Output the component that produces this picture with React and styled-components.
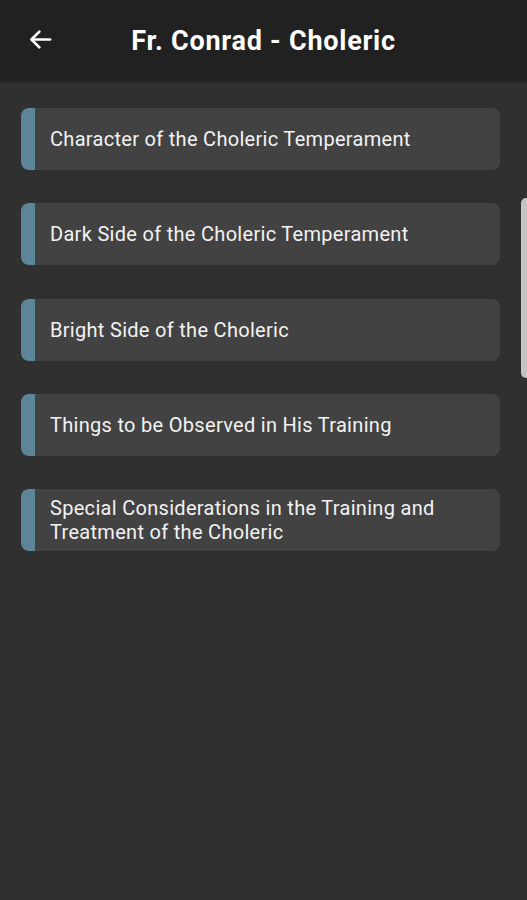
import React from 'react'
import styled, { createGlobalStyle } from 'styled-components'

const chapters = [
  'Character of the Choleric Temperament',
  'Dark Side of the Choleric Temperament',
  'Bright Side of the Choleric',
  'Things to be Observed in His Training',
  'Special Considerations in the Training and Treatment of the Choleric',
]

const GlobalStyle = createGlobalStyle`
  html, body {
    margin: 0;
    padding: 0;
    background: #303030;
    font-family: Roboto, "Liberation Sans", sans-serif;
  }
`

const App = () => {
  return (
    <Screen>
      <GlobalStyle />
      <Toolbar>
        <BackButton aria-label="Back">
          <svg width="27" height="27" viewBox="0 0 24 24" fill="none" stroke="#fff" strokeWidth="2.4" strokeLinecap="round" strokeLinejoin="round">
            <path d="M20.5 12H4.5" />
            <path d="M11 5l-7 7 7 7" />
          </svg>
        </BackButton>
        <Title>Fr. Conrad - Choleric</Title>
      </Toolbar>
      <List>
        {chapters.map((c) => (
          <Card key={c}>
            <CardText>{c}</CardText>
          </Card>
        ))}
      </List>
      <Scrollbar />
    </Screen>
  )
}

const Screen = styled.div`
  position: relative;
  width: 527px;
  min-height: 900px;
  background: #303030;
  overflow: hidden;
`

const Toolbar = styled.header`
  height: 81px;
  background: #212121;
  display: flex;
  align-items: center;
  justify-content: center;
  position: relative;
  box-shadow: 0 1px 3px rgba(0, 0, 0, 0.3);
`

const BackButton = styled.div`
  position: absolute;
  left: 27px;
  top: 26px;
  display: flex;
`

const Title = styled.h1`
  margin: 0 0 0 0;
  color: #fff;
  font-size: 27px;
  font-weight: 700;
  letter-spacing: 0.75px;
`

const List = styled.div`
  display: flex;
  flex-direction: column;
  gap: 33.3px;
  padding: 27px 27px 0 21px;
`

const Card = styled.div`
  min-height: 62px;
  box-sizing: border-box;
  background: #424242;
  border-left: 14px solid #5d8497;
  border-radius: 8px;
  display: flex;
  align-items: center;
  padding: 6px 16px 6px 15px;
`

const CardText = styled.span`
  color: #f2f2f2;
  font-size: 20px;
  line-height: 24px;
  letter-spacing: 0.3px;
`

const Scrollbar = styled.div`
  position: absolute;
  right: -4px;
  top: 198px;
  width: 10px;
  height: 180px;
  border-radius: 5px;
  background: #c4c4c4;
`

export default App
